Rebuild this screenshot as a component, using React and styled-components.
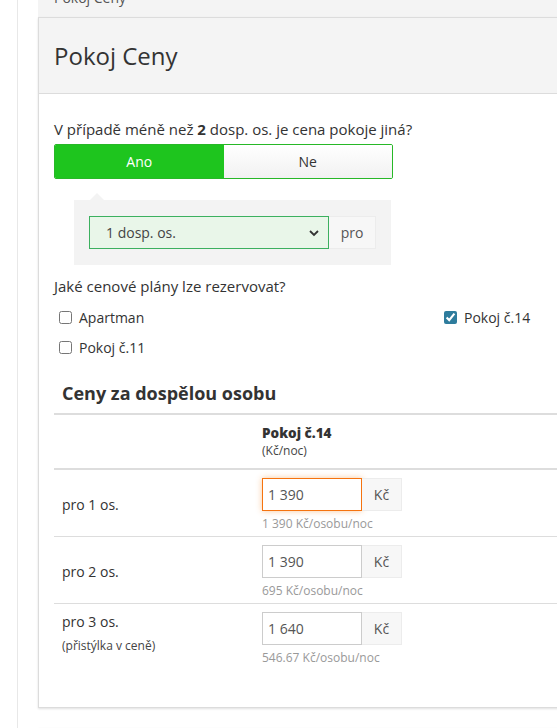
import React from 'react'
import styled, { createGlobalStyle } from 'styled-components'

const GlobalStyle = createGlobalStyle`
  html, body {
    margin: 0;
    padding: 0;
    background: #fff;
    overflow: hidden;
  }
  body {
    font-family: "Open Sans", "Liberation Sans", sans-serif;
    color: #333;
    font-size: 14px;
  }
`

const Page = styled.div`
  display: flex;
  height: 728px;
  overflow: hidden;
`
const Sidebar = styled.div`
  width: 17px;
  flex: 0 0 17px;
  border-right: 1px solid #e8e8e8;
`
const Main = styled.div`
  flex: 1;
  padding-left: 20px;
  min-width: 0;
  display: flex;
  flex-direction: column;
`
const TopBar = styled.div`
  height: 17px;
  flex: 0 0 17px;
  background: #f4f4f4;
  overflow: hidden;
  padding-left: 16px;
  font-size: 14px;
  color: #555;
  & span {
    display: block;
    margin-top: -12px;
    line-height: 20px;
  }
`
const Panel = styled.section`
  width: 560px;
  border: 1px solid #dcdcdc;
  background: #fff;
  box-shadow: 0 1px 2px rgba(0, 0, 0, 0.12);
  flex: 0 0 auto;
`
const PanelHeader = styled.header`
  height: 75px;
  display: flex;
  align-items: center;
  padding-left: 15px;
  background: #f4f4f4;
  border-bottom: 1px solid #dcdcdc;
  & h2 {
    margin: 0;
    font-weight: 400;
    font-size: 24px;
    color: #333;
  }
`
const PanelBody = styled.div`
  padding: 25px 0 37px 15px;
`
const Question = styled.p`
  margin: 0;
  line-height: 20px;
  font-size: 15px;
`
const Toggle = styled.div`
  display: flex;
  width: 339px;
  height: 35px;
  margin-top: 5px;
  border: 1px solid #27b827;
  border-radius: 2px;
  box-sizing: border-box;
  overflow: hidden;
`
const ToggleButton = styled.button`
  flex: 1;
  border: 0;
  font-family: inherit;
  font-size: 14px;
  color: ${p => (p.active ? '#fff' : '#333')};
  background: ${p =>
    p.active ? '#1ec51e' : 'linear-gradient(#ffffff, #f1f1f1)'};
  cursor: pointer;
`
const Popover = styled.div`
  position: relative;
  margin: 21px 0 0 20px;
  width: 317px;
  box-sizing: border-box;
  padding: 16px 15px;
  background: #f3f3f3;
  display: flex;
  &::before {
    content: '';
    position: absolute;
    top: -7px;
    left: 16px;
    border-left: 7px solid transparent;
    border-right: 7px solid transparent;
    border-bottom: 7px solid #f3f3f3;
  }
`
const SelectBox = styled.div`
  width: 240px;
  height: 33px;
  box-sizing: border-box;
  border: 1px solid #3cb05f;
  background: #e9f6e9;
  display: flex;
  align-items: center;
  justify-content: space-between;
  padding: 0 8px 0 16px;
  font-size: 14px;
  color: #444;
`
const Addon = styled.span`
  width: ${p => p.w || 47}px;
  height: 33px;
  box-sizing: border-box;
  display: flex;
  align-items: center;
  justify-content: center;
  background: #f7f7f7;
  border: 1px solid #ececec;
  border-left: 0;
  font-size: 14px;
  color: #555;
`
const SubQuestion = styled(Question)`
  margin-top: 11px;
`
const PlanGrid = styled.div`
  display: grid;
  grid-template-columns: 385px 1fr;
  grid-auto-flow: column;
  grid-template-rows: 30px 30px;
  margin-top: 11px;
`
const PlanOption = styled.label`
  display: flex;
  align-items: center;
  height: 20px;
  font-size: 14px;
  color: #333;
  & input {
    width: 13px;
    height: 13px;
    margin: 0 7px 0 5px;
    accent-color: #2e7c9d;
  }
`
const SectionTitle = styled.h3`
  margin: 14px 0 0 8px;
  font-size: 18px;
  font-weight: 700;
  line-height: 24px;
  color: #333;
`
const PriceTable = styled.table`
  margin-top: 8px;
  width: 560px;
  border-collapse: collapse;
  border-top: 2px solid #dddddd;
  font-size: 14px;
`
const HeadCell = styled.th`
  text-align: left;
  vertical-align: top;
  padding: 9px 8px 8px;
  border-bottom: 2px solid #dddddd;
  width: ${p => p.w || 'auto'};
  & b {
    display: block;
    font-size: 13.5px;
    line-height: 18px;
  }
  & small {
    display: block;
    font-weight: 400;
    font-size: 12px;
    line-height: 18px;
    color: #444;
  }
`
const Cell = styled.td`
  padding: 8px 8px 4px;
  border-bottom: ${p => (p.last ? '0' : '1px solid #dddddd')};
  vertical-align: ${p => (p.top ? 'top' : 'middle')};
  line-height: 20px;
  & small {
    display: block;
    margin-top: 4px;
    font-size: 12px;
    color: #444;
  }
`
const InputGroup = styled.div`
  display: flex;
`
const PriceInput = styled.input`
  width: 100px;
  height: 33px;
  box-sizing: border-box;
  padding: 0 5px;
  border: 1px solid ${p => (p.focused ? '#f5730f' : '#cccccc')};
  box-shadow: ${p => (p.focused ? '0 0 6px rgba(245, 130, 30, 0.45)' : 'none')};
  font-family: inherit;
  font-size: 14px;
  color: #555;
  outline: none;
`
const Hint = styled.div`
  margin-top: 5px;
  font-size: 12px;
  line-height: 16px;
  color: #999;
`
const NextPanel = styled(Panel)`
  margin-top: 20px;
  height: 40px;
`

const Chevron = () => (
  <svg width="12" height="12" viewBox="0 0 12 12">
    <path d="M2 4l4 4 4-4" fill="none" stroke="#333" strokeWidth="1.8" />
  </svg>
)

const rows = [
  { label: 'pro 1 os.', value: '1 390', hint: '1 390 Kč/osobu/noc', focused: true },
  { label: 'pro 2 os.', value: '1 390', hint: '695 Kč/osobu/noc' },
  { label: 'pro 3 os.', note: '(přistýlka v ceně)', value: '1 640', hint: '546.67 Kč/osobu/noc' },
]

export default function App() {
  return (
    <>
      <GlobalStyle />
      <Page>
        <Sidebar />
        <Main>
          <TopBar>
            <span>Pokoj Ceny</span>
          </TopBar>
          <Panel>
            <PanelHeader>
              <h2>Pokoj Ceny</h2>
            </PanelHeader>
            <PanelBody>
              <Question>
                V případě méně než <b>2</b> dosp. os. je cena pokoje jiná?
              </Question>
              <Toggle>
                <ToggleButton active>Ano</ToggleButton>
                <ToggleButton>Ne</ToggleButton>
              </Toggle>
              <Popover>
                <SelectBox>
                  1 dosp. os.
                  <Chevron />
                </SelectBox>
                <Addon>pro</Addon>
              </Popover>
              <SubQuestion>Jaké cenové plány lze rezervovat?</SubQuestion>
              <PlanGrid>
                <PlanOption>
                  <input type="checkbox" readOnly />
                  Apartman
                </PlanOption>
                <PlanOption>
                  <input type="checkbox" readOnly />
                  Pokoj č.11
                </PlanOption>
                <PlanOption>
                  <input type="checkbox" defaultChecked />
                  Pokoj č.14
                </PlanOption>
              </PlanGrid>
              <SectionTitle>Ceny za dospělou osobu</SectionTitle>
              <PriceTable>
                <thead>
                  <tr>
                    <HeadCell w="184px" />
                    <HeadCell>
                      <b>Pokoj č.14</b>
                      <small>(Kč/noc)</small>
                    </HeadCell>
                  </tr>
                </thead>
                <tbody>
                  {rows.map((r, i) => (
                    <tr key={i}>
                      <Cell top={!!r.note} last={i === rows.length - 1}>
                        {r.label}
                        {r.note && <small>{r.note}</small>}
                      </Cell>
                      <Cell last={i === rows.length - 1}>
                        <InputGroup>
                          <PriceInput defaultValue={r.value} focused={r.focused} />
                          <Addon w={40}>Kč</Addon>
                        </InputGroup>
                        <Hint>{r.hint}</Hint>
                      </Cell>
                    </tr>
                  ))}
                </tbody>
              </PriceTable>
            </PanelBody>
          </Panel>
          <NextPanel />
        </Main>
      </Page>
    </>
  )
}
